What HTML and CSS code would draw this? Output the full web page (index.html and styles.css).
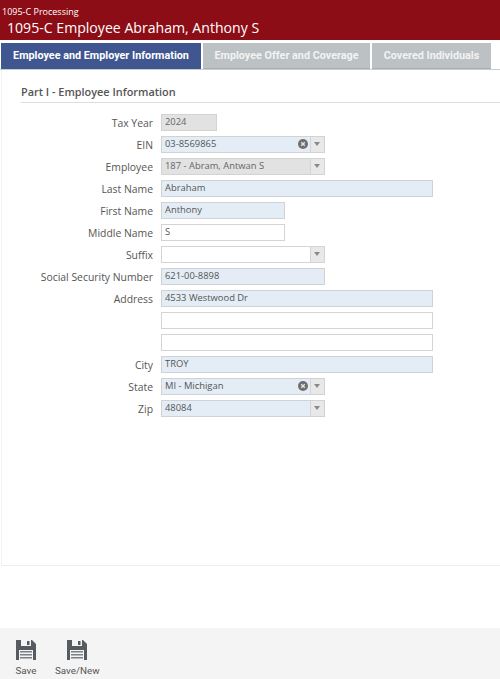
FILE: index.html
```html
<!DOCTYPE html>
<html lang="en">
<head>
<meta charset="utf-8">
<title>1095-C Employee</title>
<link rel="stylesheet" href="styles.css">
</head>
<body>
<div class="page">
  <header class="header">
    <div class="crumb">1095-C Processing</div>
    <h1 class="title">1095-C Employee Abraham, Anthony S</h1>
  </header>
  <nav class="tabs">
    <div class="tab tab-active tab-1">Employee and Employer Information</div>
    <div class="tab tab-2">Employee Offer and Coverage</div>
    <div class="tab tab-3">Covered Individuals</div>
  </nav>
  <main class="panel">
    <h2 class="section">Part I - Employee Information</h2>
    <div class="form">
      <div class="row"><span class="label">Tax Year</span><div class="field w-year off">2024</div></div>
      <div class="row"><span class="label">EIN</span><div class="field w-mid req combo"><span class="val">03-8569865</span><span class="clear"><svg viewBox="0 0 10 10" width="10" height="10"><circle cx="5" cy="5" r="5" fill="#6f6f6f"/><path d="M3.2 3.2l3.6 3.6M6.8 3.2l-3.6 3.6" stroke="#e4e4e4" stroke-width="1.4"/></svg></span><span class="arrow"></span></div></div>
      <div class="row"><span class="label">Employee</span><div class="field w-mid off combo"><span class="val">187 - Abram, Antwan S</span><span class="arrow"></span></div></div>
      <div class="row"><span class="label">Last Name</span><div class="field w-long req">Abraham</div></div>
      <div class="row"><span class="label">First Name</span><div class="field w-name req">Anthony</div></div>
      <div class="row"><span class="label">Middle Name</span><div class="field w-name">S</div></div>
      <div class="row"><span class="label">Suffix</span><div class="field w-mid combo"><span class="val"></span><span class="arrow"></span></div></div>
      <div class="row"><span class="label">Social Security Number</span><div class="field w-mid req">621-00-8898</div></div>
      <div class="row"><span class="label">Address</span><div class="field w-long req">4533 Westwood Dr</div></div>
      <div class="row"><span class="label"></span><div class="field w-long"></div></div>
      <div class="row"><span class="label"></span><div class="field w-long"></div></div>
      <div class="row"><span class="label">City</span><div class="field w-long req">TROY</div></div>
      <div class="row"><span class="label">State</span><div class="field w-mid req combo"><span class="val">MI - Michigan</span><span class="clear"><svg viewBox="0 0 10 10" width="10" height="10"><circle cx="5" cy="5" r="5" fill="#6f6f6f"/><path d="M3.2 3.2l3.6 3.6M6.8 3.2l-3.6 3.6" stroke="#e4e4e4" stroke-width="1.4"/></svg></span><span class="arrow"></span></div></div>
      <div class="row"><span class="label">Zip</span><div class="field w-mid req combo"><span class="val">48084</span><span class="arrow"></span></div></div>
    </div>
  </main>
  <footer class="footer">
    <div class="action action-save">
      <svg class="disk" viewBox="0 0 20 20" width="20" height="20"><path fill-rule="evenodd" fill="#555b60" d="M0 0H16L20 4V20H0ZM5 0V6H15V0ZM11 1H13.5V5H11ZM3 10V20H17V10Z"/><path fill="#7b8085" d="M4 11H16V12.500H4ZM4 14H16V15.500H4ZM4 17H16V18.500H4Z"/></svg>
      <span class="action-label">Save</span>
    </div>
    <div class="action">
      <svg class="disk" viewBox="0 0 20 20" width="20" height="20"><path fill-rule="evenodd" fill="#555b60" d="M0 0H16L20 4V20H0ZM5 0V6H15V0ZM11 1H13.5V5H11ZM3 10V20H17V10Z"/><path fill="#7b8085" d="M4 11H16V12.500H4ZM4 14H16V15.500H4ZM4 17H16V18.500H4Z"/></svg>
      <span class="action-label">Save/New</span>
    </div>
  </footer>
</div>
</body>
</html>
```
FILE: styles.css
```css
* { box-sizing: border-box; }
html, body { margin: 0; padding: 0; background: #fff; }
body { font-family: "Open Sans", "Liberation Sans", sans-serif; color: #555; }
.page { width: 500px; height: 679px; display: flex; flex-direction: column; overflow: hidden; }
.header { height: 40px; background: #8c0d15; color: #fff; padding: 7px 0 0 2px; flex: none; }
.crumb { font-size: 9px; line-height: 10px; }
.title { margin: 2px 0 0 5px; font-size: 14.100px; line-height: 17px; font-weight: 400; }
.tabs { display: flex; height: 30px; padding: 3px 0 0 1px; gap: 2px; border-bottom: 1px solid #c9cccd; flex: none; }
.tab { height: 26px; background: #bcc1c3; color: #f2f3f3; font: 700 10.800px/26px Roboto, sans-serif; text-align: center; border-bottom: 1px solid #a9aeb0; }
.tab-1 { width: 200px; }
.tab-2 { width: 167px; }
.tab-3 { width: 119px; }
.tab-active { background: #3f5690; color: #fff; border-bottom-color: #3f5690; }
.panel { height: 496px; margin-left: 1px; padding: 14px 0 0 19px; border-left: 1px solid #f1f1f1; border-bottom: 1px solid #eeeeee; flex: none; }
.section { margin: 0; height: 19px; font-size: 10.900px; line-height: 16px; font-weight: 600; color: #555; border-bottom: 1px solid #dcdcdc; }
.form { padding-top: 11px; display: flex; flex-direction: column; gap: 5.500px; }
.row { display: flex; align-items: center; height: 16.500px; }
.label { width: 132px; margin-right: 8px; padding-top: 2px; text-align: right; font-size: 10.400px; color: #555; line-height: 16px; white-space: nowrap; }
.field { height: 16.500px; border: 1px solid #d2d4d5; background: #fff; font-size: 9.400px; line-height: 14px; padding-left: 3px; color: #555; }
.req { background: #e4edf5; border-color: #cfd3d6; }
.off { background: #e2e2e2; border-color: #d3d3d3; color: #666; }
.w-year { width: 56px; }
.w-mid { width: 164px; }
.w-name { width: 124px; }
.w-long { width: 272px; }
.combo { display: flex; align-items: center; padding-right: 0; }
.val { flex: 1; }
.clear { display: flex; margin-right: 2px; }
.arrow { width: 14px; height: 14.500px; background: #e8e8e8; border-left: 1px solid #d2d4d5; position: relative; flex: none; }
.arrow::after { content: ""; position: absolute; left: 3px; top: 5px; border: 3px solid transparent; border-top: 4px solid #8a8a8a; border-bottom: 0; width: 0; height: 0; }
.footer { flex: 1; margin-top: 62px; background: #f4f4f4; display: flex; padding: 12px 0 0 16px; gap: 19px; }
.action { display: flex; flex-direction: column; align-items: center; }
.action-save { width: 20px; }
.action-label { font: 400 9.800px/12px Roboto, sans-serif; color: #555; margin-top: 5px; white-space: nowrap; }
```
